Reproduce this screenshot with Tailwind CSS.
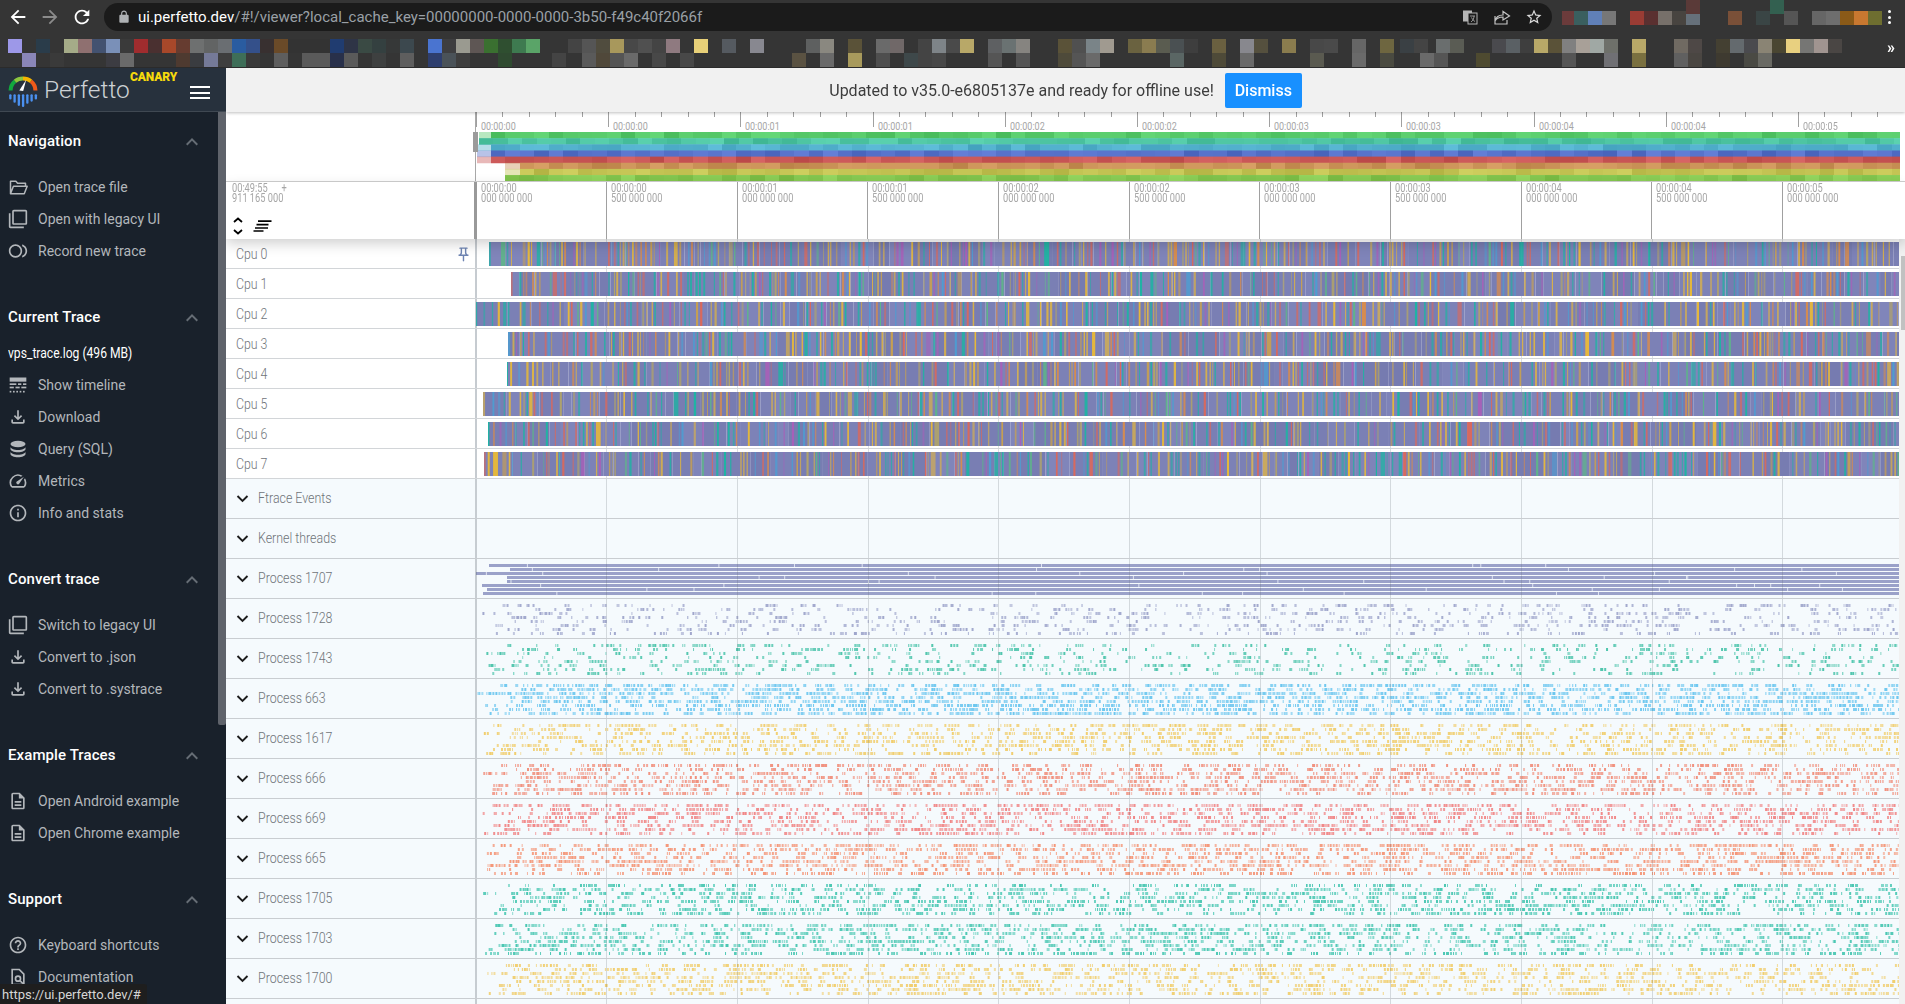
<!doctype html>
<html lang="en">
<head>
<meta charset="utf-8">
<title>Perfetto</title>
<script src="https://cdn.jsdelivr.net/npm/@tailwindcss/browser@4"></script>
</head>
<body class="h-[1004px] w-[1905px] overflow-hidden bg-white font-['Roboto',sans-serif]">
<svg class="hidden" xmlns="http://www.w3.org/2000/svg">
  <symbol id="i-folder" viewBox="0 0 24 24"><path d="M3 20V5h6.5l2 2.5H21V11M3 20l3.5-9H23l-3.5 9z" fill="none" stroke="currentColor" stroke-width="1.8" stroke-linejoin="round"/></symbol>
  <symbol id="i-legacy" viewBox="0 0 24 24"><path fill="currentColor" d="M3 5H1v16c0 1.1.9 2 2 2h16v-2H3V5zm18-4H7c-1.1 0-2 .9-2 2v14c0 1.1.9 2 2 2h14c1.1 0 2-.9 2-2V3c0-1.1-.9-2-2-2zm0 16H7V3h14v14z"/></symbol>
  <symbol id="i-record" viewBox="0 0 24 24"><path fill="currentColor" d="M9 4c-4.42 0-8 3.58-8 8s3.58 8 8 8 8-3.58 8-8-3.58-8-8-8zm0 14c-3.31 0-6-2.69-6-6s2.69-6 6-6 6 2.69 6 6-2.69 6-6 6zm8-13.74v2.09c2.33.82 4 3.04 4 5.65s-1.67 4.83-4 5.65v2.09c3.45-.89 6-4.01 6-7.74s-2.55-6.85-6-7.74z"/></symbol>
  <symbol id="i-timeline" viewBox="0 0 24 24"><g fill="currentColor"><rect x="2" y="3" width="20" height="5"/><rect x="2" y="10" width="8" height="2"/><rect x="12" y="10" width="4" height="2"/><rect x="18" y="10" width="4" height="2"/><rect x="2" y="14" width="5" height="2"/><rect x="9" y="14" width="5" height="2"/><rect x="16" y="14" width="6" height="2"/><rect x="2" y="19" width="2" height="2"/><rect x="6" y="19" width="2" height="2"/><rect x="10" y="19" width="2" height="2"/><rect x="14" y="19" width="2" height="2"/><rect x="18" y="19" width="2" height="2"/></g></symbol>
  <symbol id="i-download" viewBox="0 0 24 24"><path fill="currentColor" d="M18 15v3H6v-3H4v3c0 1.1.9 2 2 2h12c1.1 0 2-.9 2-2v-3h-2zm-1-4l-1.41-1.41L13 12.17V4h-2v8.17L8.41 9.59 7 11l5 5 5-5z"/></symbol>
  <symbol id="i-db" viewBox="0 0 24 24"><g fill="currentColor"><ellipse cx="12" cy="6" rx="9" ry="4"/><path d="M3 9.2c0 2.2 4 4 9 4s9-1.8 9-4V12c0 2.2-4 4-9 4s-9-1.800-9-4z"/><path d="M3 15c0 2.200 4 4 9 4s9-1.800 9-4v3c0 2.200-4 4-9 4s-9-1.800-9-4z"/></g></symbol>
  <symbol id="i-speed" viewBox="0 0 24 24"><path fill="currentColor" d="M20.38 8.570l-1.230 1.850a8 8 0 0 1-.220 7.580H5.070A8 8 0 0 1 15.580 6.850l1.850-1.230A10 10 0 0 0 3.350 19a2 2 0 0 0 1.720 1h13.850a2 2 0 0 0 1.740-1 10 10 0 0 0-.270-10.440zm-9.790 6.840a2 2 0 0 0 2.830 0l5.660-8.490-8.490 5.660a2 2 0 0 0 0 2.830z"/></symbol>
  <symbol id="i-info" viewBox="0 0 24 24"><path fill="currentColor" d="M11 7h2v2h-2zm0 4h2v6h-2zm1-9C6.480 2 2 6.480 2 12s4.480 10 10 10 10-4.480 10-10S17.520 2 12 2zm0 18c-4.410 0-8-3.590-8-8s3.590-8 8-8 8 3.590 8 8-3.590 8-8 8z"/></symbol>
  <symbol id="i-doc" viewBox="0 0 24 24"><path fill="currentColor" d="M8 16h8v2H8zm0-4h8v2H8zm6-10H6c-1.100 0-2 .9-2 2v16c0 1.100.89 2 1.990 2H18c1.100 0 2-.9 2-2V8l-6-6zm4 18H6V4h7v5h5v11z"/></symbol>
  <symbol id="i-help" viewBox="0 0 24 24"><path fill="currentColor" d="M11 18h2v-2h-2v2zm1-16C6.480 2 2 6.480 2 12s4.480 10 10 10 10-4.480 10-10S17.520 2 12 2zm0 18c-4.410 0-8-3.590-8-8s3.590-8 8-8 8 3.590 8 8-3.590 8-8 8zm0-14c-2.210 0-4 1.790-4 4h2c0-1.100.9-2 2-2s2 .9 2 2c0 2-3 1.750-3 5h2c0-2.250 3-2.500 3-5 0-2.210-1.790-4-4-4z"/></symbol>
  <symbol id="i-find" viewBox="0 0 24 24"><path d="M5 3h8.500L19 8.500V21H5z" fill="none" stroke="currentColor" stroke-width="2"/><circle cx="12" cy="14" r="3" fill="none" stroke="currentColor" stroke-width="2"/><path d="M14.500 16.500L18 20" stroke="currentColor" stroke-width="2"/></symbol>
  <symbol id="i-up" viewBox="0 0 24 24"><path fill="currentColor" d="M12 8l-6 6 1.410 1.410L12 10.830l4.590 4.580L18 14z"/></symbol>
  <symbol id="i-down" viewBox="0 0 24 24"><path d="M4 8l8 8 8-8" fill="none" stroke="currentColor" stroke-width="3"/></symbol>
</svg>

<!-- browser chrome -->
<div class="h-[68px] bg-[#353535] border-b border-[#2b2b2b] relative">
  <div class="flex h-[34px] items-center">
    <div class="flex w-[104px] items-center pl-[7px] gap-[10px]">
      <svg class="w-[22px] h-[22px] text-white" viewBox="0 0 24 24"><path fill="currentColor" d="M20 11H7.830l5.590-5.590L12 4l-8 8 8 8 1.410-1.410L7.830 13H20v-2z"/></svg>
      <svg class="w-[22px] h-[22px] text-[#8b8b8b]" viewBox="0 0 24 24"><path fill="currentColor" d="M4 11h12.170l-5.590-5.590L12 4l8 8-8 8-1.410-1.410L16.170 13H4v-2z"/></svg>
      <svg class="w-[22px] h-[22px] text-white" viewBox="0 0 24 24"><path fill="currentColor" d="M17.650 6.350C16.200 4.900 14.210 4 12 4c-4.420 0-7.990 3.580-7.990 8s3.570 8 7.990 8c3.730 0 6.840-2.550 7.730-6h-2.080c-.82 2.330-3.040 4-5.650 4-3.310 0-6-2.690-6-6s2.690-6 6-6c1.660 0 3.140.69 4.220 1.780L13 11h7V4l-2.350 2.350z"/></svg>
    </div>
    <div class="flex h-[28px] w-[1448px] items-center rounded-full bg-[#1b1b1b] pl-[13px] pr-[9px]">
      <svg class="w-[14px] h-[14px] text-[#aeb1b4]" viewBox="0 0 24 24"><path fill="currentColor" d="M18 8h-1V6c0-2.760-2.240-5-5-5S7 3.240 7 6v2H6c-1.100 0-2 .9-2 2v10c0 1.100.9 2 2 2h12c1.100 0 2-.9 2-2V10c0-1.100-.9-2-2-2zM9 6c0-1.660 1.340-3 3-3s3 1.340 3 3v2H9V6z"/></svg>
      <div class="ml-[7px] flex-1 text-[15px] whitespace-nowrap text-white">ui.perfetto.dev<span class="text-[#9aa0a6]">/#!/viewer?local_cache_key=00000000-0000-0000-3b50-f49c40f2066f</span></div>
      <svg class="w-[16px] h-[16px] text-[#b5b5b5]" viewBox="0 0 16 16"><rect x="1" y="1.500" width="9" height="11" fill="currentColor"/><rect x="6" y="4" width="9" height="11" fill="#1b1b1b" stroke="currentColor"/><path d="M8 7h5M9 13c2-1.500 3-3.500 3-6M9.500 8.500c1 2 2 3 3.500 4" stroke="currentColor" fill="none" stroke-width=".8"/></svg>
      <svg class="ml-[15px] w-[18px] h-[18px] text-[#c4c4c4]" viewBox="0 0 18 18"><path d="M2 8v8h12v-4M2 13c1-4 4-6 8-6V3.500L16.500 8 10 12V9c-3 0-6 1-8 4z" fill="none" stroke="currentColor" stroke-width="1.200"/></svg>
      <svg class="ml-[14px] w-[18px] h-[18px] text-[#dcdcdc]" viewBox="0 0 24 24"><path fill="currentColor" d="M22 9.240l-7.190-.62L12 2 9.190 8.630 2 9.240l5.460 4.730L5.820 21 12 17.270 18.180 21l-1.630-7.030L22 9.240zM12 15.400l-3.760 2.270 1-4.280-3.320-2.880 4.380-.38L12 6.100l1.710 4.040 4.380.38-3.320 2.880 1 4.280L12 15.400z"/></svg>
    </div>
    <canvas id="topMosaic" width="330" height="34" class="ml-[10px] block w-[330px] h-[34px]"></canvas>
    <div class="flex flex-col items-center gap-[2.500px] ml-[-4px]">
      <span class="h-[3px] w-[3px] rounded-full bg-white"></span><span class="h-[3px] w-[3px] rounded-full bg-white"></span><span class="h-[3px] w-[3px] rounded-full bg-white"></span>
    </div>
  </div>
  <canvas id="bookmarks" width="1905" height="33" class="block w-[1905px] h-[33px]"></canvas>
  <div class="absolute left-[1887px] top-[39px] text-[16px] leading-[18px] font-bold text-white">»</div>
</div>

<div class="flex h-[936px]">
  <!-- sidebar -->
  <aside class="relative w-[226px] shrink-0 overflow-hidden bg-[#19212b]">
    <div class="relative h-[44px] border-b border-[#3f4852] bg-[#27313d]">
      <div class="flex h-full items-center pl-[8px]">
        <svg class="w-[30px] h-[34px] mt-[2px]" viewBox="0 0 28 32">
          <g fill="none" stroke-width="3.800">
            <path d="M2.300 15.500A11.500 11.500 0 0 1 6.500 6.800" stroke="#12a83e"/>
            <path d="M6.500 6.800A11.500 11.500 0 0 1 14 4.200" stroke="#8cc63f"/>
            <path d="M14 4.200A11.500 11.500 0 0 1 21.500 6.800" stroke="#f4b400"/>
            <path d="M21.500 6.800A11.500 11.500 0 0 1 25.700 15.500" stroke="#ef5a1a"/>
          </g>
          <path d="M10.500 15.500L17 5.500L14.200 16z" fill="#fff"/>
          <g fill="#4a90f0">
            <rect x="1" y="19" width="2.200" height="5" rx="1"/><rect x="5" y="19" width="2.200" height="8" rx="1"/><rect x="9" y="19" width="2.200" height="11" rx="1"/><rect x="13" y="19" width="2.200" height="12" rx="1"/><rect x="17" y="19" width="2.200" height="9" rx="1"/><rect x="21" y="19" width="2.200" height="7" rx="1"/><rect x="25" y="19" width="2.200" height="5" rx="1"/>
          </g>
        </svg>
        <span class="ml-[6px] pt-[2px] text-[24.500px] font-light leading-none text-[#cdd1d5]">Perfetto</span>
      </div>
      <span class="absolute left-[130px] top-[2px] text-[12px] leading-[14px] font-black tracking-[-0.1px] text-[#f6d90c]">CANARY</span>
      <div class="absolute left-[190px] top-[18px] flex w-[20px] flex-col gap-[3.500px]">
        <span class="h-[2px] bg-white"></span><span class="h-[2px] bg-white"></span><span class="h-[2px] bg-white"></span>
      </div>
    </div>

    <div class="pt-[13px] text-[14px] text-[#b3b7bb]">
      <div class="flex h-[32px] items-center justify-between pl-[8px] pr-[22px] pt-[1px] text-[15px] font-medium tracking-[.1px] text-white"><span>Navigation</span><svg class="w-[24px] h-[24px] text-[#666d75]"><use href="#i-up"/></svg></div>
      <div class="mt-[14px]">
        <div class="flex h-[32px] items-center gap-[10px] pl-[8px]"><svg class="w-[20px] h-[20px]"><use href="#i-folder"/></svg><span>Open trace file</span></div>
        <div class="flex h-[32px] items-center gap-[10px] pl-[8px]"><svg class="w-[20px] h-[20px]"><use href="#i-legacy"/></svg><span>Open with legacy UI</span></div>
        <div class="flex h-[32px] items-center gap-[10px] pl-[8px]"><svg class="w-[20px] h-[20px]"><use href="#i-record"/></svg><span>Record new trace</span></div>
      </div>

      <div class="mt-[34px] flex h-[32px] items-center justify-between pl-[8px] pr-[22px] pt-[1px] text-[15px] font-medium tracking-[.1px] text-white"><span>Current Trace</span><svg class="w-[24px] h-[24px] text-[#666d75]"><use href="#i-up"/></svg></div>
      <div class="flex h-[36px] items-center pl-[8px] pt-[4px] text-white"><span class="inline-block origin-left scale-x-[.865] whitespace-nowrap">vps_trace.log (496 MB)</span></div>
      <div>
        <div class="flex h-[32px] items-center gap-[10px] pl-[8px]"><svg class="w-[20px] h-[20px]"><use href="#i-timeline"/></svg><span>Show timeline</span></div>
        <div class="flex h-[32px] items-center gap-[10px] pl-[8px]"><svg class="w-[20px] h-[20px]"><use href="#i-download"/></svg><span>Download</span></div>
        <div class="flex h-[32px] items-center gap-[10px] pl-[8px]"><svg class="w-[20px] h-[20px]"><use href="#i-db"/></svg><span>Query (SQL)</span></div>
        <div class="flex h-[32px] items-center gap-[10px] pl-[8px]"><svg class="w-[20px] h-[20px]"><use href="#i-speed"/></svg><span>Metrics</span></div>
        <div class="flex h-[32px] items-center gap-[10px] pl-[8px]"><svg class="w-[20px] h-[20px]"><use href="#i-info"/></svg><span>Info and stats</span></div>
      </div>

      <div class="mt-[34px] flex h-[32px] items-center justify-between pl-[8px] pr-[22px] pt-[1px] text-[15px] font-medium tracking-[.1px] text-white"><span>Convert trace</span><svg class="w-[24px] h-[24px] text-[#666d75]"><use href="#i-up"/></svg></div>
      <div class="mt-[14px]">
        <div class="flex h-[32px] items-center gap-[10px] pl-[8px]"><svg class="w-[20px] h-[20px]"><use href="#i-legacy"/></svg><span>Switch to legacy UI</span></div>
        <div class="flex h-[32px] items-center gap-[10px] pl-[8px]"><svg class="w-[20px] h-[20px]"><use href="#i-download"/></svg><span>Convert to .json</span></div>
        <div class="flex h-[32px] items-center gap-[10px] pl-[8px]"><svg class="w-[20px] h-[20px]"><use href="#i-download"/></svg><span>Convert to .systrace</span></div>
      </div>

      <div class="mt-[34px] flex h-[32px] items-center justify-between pl-[8px] pr-[22px] pt-[1px] text-[15px] font-medium tracking-[.1px] text-white"><span>Example Traces</span><svg class="w-[24px] h-[24px] text-[#666d75]"><use href="#i-up"/></svg></div>
      <div class="mt-[14px]">
        <div class="flex h-[32px] items-center gap-[10px] pl-[8px]"><svg class="w-[20px] h-[20px]"><use href="#i-doc"/></svg><span>Open Android example</span></div>
        <div class="flex h-[32px] items-center gap-[10px] pl-[8px]"><svg class="w-[20px] h-[20px]"><use href="#i-doc"/></svg><span>Open Chrome example</span></div>
      </div>

      <div class="mt-[34px] flex h-[32px] items-center justify-between pl-[8px] pr-[22px] pt-[1px] text-[15px] font-medium tracking-[.1px] text-white"><span>Support</span><svg class="w-[24px] h-[24px] text-[#666d75]"><use href="#i-up"/></svg></div>
      <div class="mt-[14px]">
        <div class="flex h-[32px] items-center gap-[10px] pl-[8px]"><svg class="w-[20px] h-[20px]"><use href="#i-help"/></svg><span>Keyboard shortcuts</span></div>
        <div class="flex h-[32px] items-center gap-[10px] pl-[8px]"><svg class="w-[20px] h-[20px]"><use href="#i-find"/></svg><span>Documentation</span></div>
      </div>
    </div>
    <div class="absolute left-[218px] top-[44px] h-[613px] w-[8px] rounded-b-[2px] bg-[#5f636b]"></div>
  </aside>

  <!-- main -->
  <main class="flex w-[1679px] flex-col overflow-hidden">
    <div class="relative z-10 flex h-[44px] shrink-0 items-center justify-center gap-[11px] bg-[#f1f1f1] pl-[0px] pt-[1px] shadow-[0_1px_3px_rgba(0,0,0,.25)]">
      <span class="text-[16px] text-[#3d3d3d]">Updated to v35.0-e6805137e and ready for offline use!</span>
      <span class="flex h-[35px] w-[77px] items-center justify-center rounded-[2px] bg-[#1890ff] text-[16px] font-medium text-white">Dismiss</span>
    </div>

    <!-- overview -->
    <div class="flex h-[70px] shrink-0 border-b border-[#cfcfcf]">
      <div class="w-[249px] shrink-0"></div>
      <div class="relative flex-1 border-l border-[#a8a8a8]">
        <div class="flex h-[20px] w-[1424px] bg-[repeating-linear-gradient(90deg,#a0a0a0_0,#a0a0a0_1px,transparent_1px,transparent_26.440px)] bg-[length:100%_5px] bg-no-repeat text-[10px] leading-[10px] text-[#a6a6a6]">
          <div class="h-[15px] w-[132.200px] shrink-0 border-l border-[#a0a0a0] pl-[4px] pt-[10px]"><span class="inline-block origin-left scale-x-[.9]">00:00:00</span></div>
          <div class="h-[15px] w-[132.200px] shrink-0 border-l border-[#a0a0a0] pl-[4px] pt-[10px]"><span class="inline-block origin-left scale-x-[.9]">00:00:00</span></div>
          <div class="h-[15px] w-[132.200px] shrink-0 border-l border-[#a0a0a0] pl-[4px] pt-[10px]"><span class="inline-block origin-left scale-x-[.9]">00:00:01</span></div>
          <div class="h-[15px] w-[132.200px] shrink-0 border-l border-[#a0a0a0] pl-[4px] pt-[10px]"><span class="inline-block origin-left scale-x-[.9]">00:00:01</span></div>
          <div class="h-[15px] w-[132.200px] shrink-0 border-l border-[#a0a0a0] pl-[4px] pt-[10px]"><span class="inline-block origin-left scale-x-[.9]">00:00:02</span></div>
          <div class="h-[15px] w-[132.200px] shrink-0 border-l border-[#a0a0a0] pl-[4px] pt-[10px]"><span class="inline-block origin-left scale-x-[.9]">00:00:02</span></div>
          <div class="h-[15px] w-[132.200px] shrink-0 border-l border-[#a0a0a0] pl-[4px] pt-[10px]"><span class="inline-block origin-left scale-x-[.9]">00:00:03</span></div>
          <div class="h-[15px] w-[132.200px] shrink-0 border-l border-[#a0a0a0] pl-[4px] pt-[10px]"><span class="inline-block origin-left scale-x-[.9]">00:00:03</span></div>
          <div class="h-[15px] w-[132.200px] shrink-0 border-l border-[#a0a0a0] pl-[4px] pt-[10px]"><span class="inline-block origin-left scale-x-[.9]">00:00:04</span></div>
          <div class="h-[15px] w-[132.200px] shrink-0 border-l border-[#a0a0a0] pl-[4px] pt-[10px]"><span class="inline-block origin-left scale-x-[.9]">00:00:04</span></div>
          <div class="h-[15px] w-[100px] shrink-0 border-l border-[#a0a0a0] pl-[4px] pt-[10px]"><span class="inline-block origin-left scale-x-[.9]">00:00:05</span></div>
        </div>
        <canvas id="heat" width="1424" height="49" class="block w-[1424px] h-[49px]"></canvas>
        <div class="absolute left-[-3px] top-[20px] h-[20px] w-[5px] bg-[#9b9b9b]"></div>
      </div>
    </div>

    <!-- time axis -->
    <div class="relative z-10 flex h-[57px] shrink-0 bg-white shadow-[0_5px_12px_rgba(0,0,0,.18)]">
      <div class="flex w-[248px] shrink-0 flex-col justify-between pl-[6px] pt-[1px] pb-[4px]">
        <div class="text-[12px] leading-[10px] text-[#a6a6a6]">
          <div class="inline-block origin-left scale-x-[.77] whitespace-pre">00:49:55      +<br>911 165 000</div>
        </div>
        <div class="flex items-center gap-[9px]">
          <svg class="w-[12px] h-[18px] text-black" viewBox="0 0 12 18"><path d="M2 5l4-3.500L10 5M2 13l4 3.500L10 13" fill="none" stroke="currentColor" stroke-width="1.800"/></svg>
          <svg class="w-[19px] h-[12px] text-black" viewBox="0 0 19 12"><path d="M5 1.200h13.500M3.500 4.600h12M2 8h13M.5 11h10" stroke="currentColor" stroke-width="1.700"/></svg>
        </div>
      </div>
      <div class="flex flex-1 text-[12px] leading-[10px] text-[#a6a6a6]">
        <div class="h-full w-[132px] shrink-0 border-l-[3px] border-[#999] pl-[4px] pt-[1px]"><div class="origin-left scale-x-[.77] whitespace-nowrap">00:00:00<br>000 000 000</div></div>
        <div class="h-full w-[130.670px] shrink-0 border-l border-[#a0a0a0] pl-[4px] pt-[1px]"><div class="origin-left scale-x-[.77] whitespace-nowrap">00:00:00<br>500 000 000</div></div>
        <div class="h-full w-[130.670px] shrink-0 border-l border-[#a0a0a0] pl-[4px] pt-[1px]"><div class="origin-left scale-x-[.77] whitespace-nowrap">00:00:01<br>000 000 000</div></div>
        <div class="h-full w-[130.670px] shrink-0 border-l border-[#a0a0a0] pl-[4px] pt-[1px]"><div class="origin-left scale-x-[.77] whitespace-nowrap">00:00:01<br>500 000 000</div></div>
        <div class="h-full w-[130.670px] shrink-0 border-l border-[#a0a0a0] pl-[4px] pt-[1px]"><div class="origin-left scale-x-[.77] whitespace-nowrap">00:00:02<br>000 000 000</div></div>
        <div class="h-full w-[130.670px] shrink-0 border-l border-[#a0a0a0] pl-[4px] pt-[1px]"><div class="origin-left scale-x-[.77] whitespace-nowrap">00:00:02<br>500 000 000</div></div>
        <div class="h-full w-[130.670px] shrink-0 border-l border-[#a0a0a0] pl-[4px] pt-[1px]"><div class="origin-left scale-x-[.77] whitespace-nowrap">00:00:03<br>000 000 000</div></div>
        <div class="h-full w-[130.670px] shrink-0 border-l border-[#a0a0a0] pl-[4px] pt-[1px]"><div class="origin-left scale-x-[.77] whitespace-nowrap">00:00:03<br>500 000 000</div></div>
        <div class="h-full w-[130.670px] shrink-0 border-l border-[#a0a0a0] pl-[4px] pt-[1px]"><div class="origin-left scale-x-[.77] whitespace-nowrap">00:00:04<br>000 000 000</div></div>
        <div class="h-full w-[130.670px] shrink-0 border-l border-[#a0a0a0] pl-[4px] pt-[1px]"><div class="origin-left scale-x-[.77] whitespace-nowrap">00:00:04<br>500 000 000</div></div>
        <div class="h-full w-[120px] shrink-0 border-l border-[#a0a0a0] pl-[4px] pt-[1px]"><div class="origin-left scale-x-[.77] whitespace-nowrap">00:00:05<br>000 000 000</div></div>
      </div>
    </div>

    <!-- tracks -->
    <div class="relative flex min-h-0 flex-1">
      <div class="w-[1673px] shrink-0 text-[14px] font-light text-[#6f7479]">
        <div class="flex h-[30px] border-b border-[#d2d5d8] bg-white"><div class="relative flex w-[249px] shrink-0 items-center pl-[10px] pt-[2px]"><span class="inline-block origin-left scale-x-[.88]">Cpu 0</span><svg class="absolute left-[229px] top-[7px] w-[17px] h-[17px] text-[#6e84b2]" viewBox="0 0 24 24"><path fill="currentColor" d="M14 4v5c0 1.120.37 2.160 1 3H9c.65-.86 1-1.900 1-3V4h4m3-2H7c-.55 0-1 .45-1 1s.45 1 1 1h1v5c0 1.660-1.340 3-3 3v2h5.970v7l1 1 1-1v-7H19v-2c-1.660 0-3-1.340-3-3V4h1c.55 0 1-.45 1-1s-.45-1-1-1z"/></svg></div><canvas data-cpu="14" width="1424" height="29" class="block w-[1424px] h-[29px]"></canvas></div>
        <div class="flex h-[30px] border-b border-[#d2d5d8] bg-white"><div class="flex w-[249px] shrink-0 items-center pl-[10px] pt-[2px]"><span class="inline-block origin-left scale-x-[.88]">Cpu 1</span></div><canvas data-cpu="36" width="1424" height="29" class="block w-[1424px] h-[29px]"></canvas></div>
        <div class="flex h-[30px] border-b border-[#d2d5d8] bg-white"><div class="flex w-[249px] shrink-0 items-center pl-[10px] pt-[2px]"><span class="inline-block origin-left scale-x-[.88]">Cpu 2</span></div><canvas data-cpu="1" width="1424" height="29" class="block w-[1424px] h-[29px]"></canvas></div>
        <div class="flex h-[30px] border-b border-[#d2d5d8] bg-white"><div class="flex w-[249px] shrink-0 items-center pl-[10px] pt-[2px]"><span class="inline-block origin-left scale-x-[.88]">Cpu 3</span></div><canvas data-cpu="33" width="1424" height="29" class="block w-[1424px] h-[29px]"></canvas></div>
        <div class="flex h-[30px] border-b border-[#d2d5d8] bg-white"><div class="flex w-[249px] shrink-0 items-center pl-[10px] pt-[2px]"><span class="inline-block origin-left scale-x-[.88]">Cpu 4</span></div><canvas data-cpu="32" width="1424" height="29" class="block w-[1424px] h-[29px]"></canvas></div>
        <div class="flex h-[30px] border-b border-[#d2d5d8] bg-white"><div class="flex w-[249px] shrink-0 items-center pl-[10px] pt-[2px]"><span class="inline-block origin-left scale-x-[.88]">Cpu 5</span></div><canvas data-cpu="8" width="1424" height="29" class="block w-[1424px] h-[29px]"></canvas></div>
        <div class="flex h-[30px] border-b border-[#d2d5d8] bg-white"><div class="flex w-[249px] shrink-0 items-center pl-[10px] pt-[2px]"><span class="inline-block origin-left scale-x-[.88]">Cpu 6</span></div><canvas data-cpu="13" width="1424" height="29" class="block w-[1424px] h-[29px]"></canvas></div>
        <div class="flex h-[30px] border-b border-[#d2d5d8] bg-white"><div class="flex w-[249px] shrink-0 items-center pl-[10px] pt-[2px]"><span class="inline-block origin-left scale-x-[.88]">Cpu 7</span></div><canvas data-cpu="9" width="1424" height="29" class="block w-[1424px] h-[29px]"></canvas></div>

        <div class="flex h-[40px] border-b border-[#c9cdd1] bg-[#f5fafd]"><div class="flex w-[249px] shrink-0 items-center gap-[8px] pl-[9px]"><svg class="w-[15px] h-[15px] text-[#1c1c1c]"><use href="#i-down"/></svg><span class="inline-block origin-left scale-x-[.885] whitespace-nowrap">Ftrace Events</span></div><canvas data-proc="" data-density="0" width="1424" height="39" class="block w-[1424px] h-[39px]"></canvas></div>
        <div class="flex h-[40px] border-b border-[#c9cdd1] bg-[#f5fafd]"><div class="flex w-[249px] shrink-0 items-center gap-[8px] pl-[9px]"><svg class="w-[15px] h-[15px] text-[#1c1c1c]"><use href="#i-down"/></svg><span class="inline-block origin-left scale-x-[.885] whitespace-nowrap">Kernel threads</span></div><canvas data-proc="" data-density="0" width="1424" height="39" class="block w-[1424px] h-[39px]"></canvas></div>
        <div class="flex h-[40px] border-b border-[#c9cdd1] bg-[#f5fafd]"><div class="flex w-[249px] shrink-0 items-center gap-[8px] pl-[9px]"><svg class="w-[15px] h-[15px] text-[#1c1c1c]"><use href="#i-down"/></svg><span class="inline-block origin-left scale-x-[.885] whitespace-nowrap">Process 1707</span></div><canvas data-proc="#9aa1c9" data-density="1" width="1424" height="39" class="block w-[1424px] h-[39px]"></canvas></div>
        <div class="flex h-[40px] border-b border-[#c9cdd1] bg-[#f5fafd]"><div class="flex w-[249px] shrink-0 items-center gap-[8px] pl-[9px]"><svg class="w-[15px] h-[15px] text-[#1c1c1c]"><use href="#i-down"/></svg><span class="inline-block origin-left scale-x-[.885] whitespace-nowrap">Process 1728</span></div><canvas data-proc="#9aa1c9" data-density=".22" width="1424" height="39" class="block w-[1424px] h-[39px]"></canvas></div>
        <div class="flex h-[40px] border-b border-[#c9cdd1] bg-[#f5fafd]"><div class="flex w-[249px] shrink-0 items-center gap-[8px] pl-[9px]"><svg class="w-[15px] h-[15px] text-[#1c1c1c]"><use href="#i-down"/></svg><span class="inline-block origin-left scale-x-[.885] whitespace-nowrap">Process 1743</span></div><canvas data-proc="#45c2a8" data-density=".22" width="1424" height="39" class="block w-[1424px] h-[39px]"></canvas></div>
        <div class="flex h-[40px] border-b border-[#c9cdd1] bg-[#f5fafd]"><div class="flex w-[249px] shrink-0 items-center gap-[8px] pl-[9px]"><svg class="w-[15px] h-[15px] text-[#1c1c1c]"><use href="#i-down"/></svg><span class="inline-block origin-left scale-x-[.885] whitespace-nowrap">Process 663</span></div><canvas data-proc="#63c3ee" data-density=".52" width="1424" height="39" class="block w-[1424px] h-[39px]"></canvas></div>
        <div class="flex h-[40px] border-b border-[#c9cdd1] bg-[#f5fafd]"><div class="flex w-[249px] shrink-0 items-center gap-[8px] pl-[9px]"><svg class="w-[15px] h-[15px] text-[#1c1c1c]"><use href="#i-down"/></svg><span class="inline-block origin-left scale-x-[.885] whitespace-nowrap">Process 1617</span></div><canvas data-proc="#f0cb66" data-density=".4" width="1424" height="39" class="block w-[1424px] h-[39px]"></canvas></div>
        <div class="flex h-[40px] border-b border-[#c9cdd1] bg-[#f5fafd]"><div class="flex w-[249px] shrink-0 items-center gap-[8px] pl-[9px]"><svg class="w-[15px] h-[15px] text-[#1c1c1c]"><use href="#i-down"/></svg><span class="inline-block origin-left scale-x-[.885] whitespace-nowrap">Process 666</span></div><canvas data-proc="#f08a76" data-density=".45" width="1424" height="39" class="block w-[1424px] h-[39px]"></canvas></div>
        <div class="flex h-[40px] border-b border-[#c9cdd1] bg-[#f5fafd]"><div class="flex w-[249px] shrink-0 items-center gap-[8px] pl-[9px]"><svg class="w-[15px] h-[15px] text-[#1c1c1c]"><use href="#i-down"/></svg><span class="inline-block origin-left scale-x-[.885] whitespace-nowrap">Process 669</span></div><canvas data-proc="#f08080" data-density=".45" width="1424" height="39" class="block w-[1424px] h-[39px]"></canvas></div>
        <div class="flex h-[40px] border-b border-[#c9cdd1] bg-[#f5fafd]"><div class="flex w-[249px] shrink-0 items-center gap-[8px] pl-[9px]"><svg class="w-[15px] h-[15px] text-[#1c1c1c]"><use href="#i-down"/></svg><span class="inline-block origin-left scale-x-[.885] whitespace-nowrap">Process 665</span></div><canvas data-proc="#f49070" data-density=".45" width="1424" height="39" class="block w-[1424px] h-[39px]"></canvas></div>
        <div class="flex h-[40px] border-b border-[#c9cdd1] bg-[#f5fafd]"><div class="flex w-[249px] shrink-0 items-center gap-[8px] pl-[9px]"><svg class="w-[15px] h-[15px] text-[#1c1c1c]"><use href="#i-down"/></svg><span class="inline-block origin-left scale-x-[.885] whitespace-nowrap">Process 1705</span></div><canvas data-proc="#40c4ae" data-density=".4" width="1424" height="39" class="block w-[1424px] h-[39px]"></canvas></div>
        <div class="flex h-[40px] border-b border-[#c9cdd1] bg-[#f5fafd]"><div class="flex w-[249px] shrink-0 items-center gap-[8px] pl-[9px]"><svg class="w-[15px] h-[15px] text-[#1c1c1c]"><use href="#i-down"/></svg><span class="inline-block origin-left scale-x-[.885] whitespace-nowrap">Process 1703</span></div><canvas data-proc="#40c4ae" data-density=".4" width="1424" height="39" class="block w-[1424px] h-[39px]"></canvas></div>
        <div class="flex h-[40px] border-b border-[#c9cdd1] bg-[#f5fafd]"><div class="flex w-[249px] shrink-0 items-center gap-[8px] pl-[9px]"><svg class="w-[15px] h-[15px] text-[#1c1c1c]"><use href="#i-down"/></svg><span class="inline-block origin-left scale-x-[.885] whitespace-nowrap">Process 1700</span></div><canvas data-proc="#f0cb66" data-density=".4" width="1424" height="39" class="block w-[1424px] h-[39px]"></canvas></div>
        <div class="flex h-[40px] bg-[#f5fafd]"><div class="w-[249px] shrink-0"></div><canvas data-proc="" data-density="0" width="1424" height="39" class="block w-[1424px] h-[39px]"></canvas></div>
      </div>
      <div class="relative w-[6px] shrink-0 bg-[#f1f1f1]">
        <div class="absolute left-[2px] top-[17px] h-[74px] w-[4px] bg-[#c1c1c1]"></div>
      </div>
    </div>
  </main>
</div>

<div class="absolute bottom-0 left-0 z-20 flex h-[20px] w-[147px] items-center rounded-tr-[3px] bg-[#1e1e1e] pl-[2px] pt-[1px] text-[13px] whitespace-nowrap text-[#d6d6d6]">https://ui.perfetto.dev/#</div>

<script>
let seed = 12345;
function R(){ seed = (seed*1664525+1013904223)>>>0; return seed/4294967296; }
function pick(a){ return a[Math.floor(R()*a.length)]; }

// blurred bookmark mosaics
function cells(ctx, y, list){ for(const [x,c] of list){ ctx.fillStyle=c; ctx.fillRect(x,y,14,14); } }
const bm = document.getElementById('bookmarks').getContext('2d');
const rowB = [[8,'#9d98e8'],[36,'#2a3c4a'],[64,'#a5ab88'],[78,'#8f7070'],[92,'#435270'],[106,'#7a90b8'],[120,'#3a3a3a'],[134,'#a02c2e'],[148,'#4a3030'],[162,'#a8482a'],[176,'#663c30'],[190,'#6e7070'],[204,'#626464'],[218,'#6a6e72'],[232,'#2a5ca0'],[246,'#34508a'],[260,'#383030'],[274,'#6a4a28'],[288,'#333'],[302,'#333'],[316,'#333'],[330,'#203c70'],[344,'#2e3446'],[358,'#3a4a44'],[372,'#344040'],[386,'#363838'],[400,'#3c484e'],[428,'#4a74d0'],[442,'#3e3e40'],[456,'#9a9a90'],[470,'#5e5654'],[484,'#3a7030'],[498,'#2f4f30'],[512,'#3e7a50'],[526,'#5aa468'],[568,'#444'],[582,'#555'],[596,'#504c3e'],[610,'#a8985c'],[624,'#484848'],[638,'#505050'],[652,'#444'],[666,'#8f7a80'],[694,'#e8d078'],[722,'#555a60'],[750,'#888890'],[806,'#5e6060'],[820,'#8a8880'],[848,'#5a5238'],[876,'#6a6a6a'],[890,'#706868'],[918,'#444'],[932,'#7e8488'],[946,'#4a4a4a'],[960,'#b8a868'],[988,'#5e6062'],[1002,'#6a7272'],[1016,'#868480'],[1058,'#5a5238'],[1072,'#505050'],[1086,'#7a8488'],[1100,'#a09a90'],[1128,'#6a6240'],[1142,'#8a7c50'],[1156,'#5a5c50'],[1170,'#4a5052'],[1184,'#3e3e3e'],[1212,'#6a6040'],[1240,'#88888e'],[1254,'#55503e'],[1282,'#8a7c4e'],[1310,'#484848'],[1324,'#4a4a4a'],[1352,'#666'],[1380,'#6e6640'],[1400,'#3a4044'],[1414,'#444'],[1436,'#6a6e6e'],[1450,'#5a5c54'],[1492,'#4a4a4e'],[1506,'#5a6064'],[1520,'#3e3e3e'],[1534,'#b8a868'],[1548,'#5a5238'],[1562,'#808080'],[1576,'#a8a098'],[1590,'#a0a8a4'],[1604,'#6e706a'],[1632,'#b8a868'],[1674,'#706a62'],[1688,'#4e4846'],[1716,'#444032'],[1730,'#646a6e'],[1744,'#4a4a4e'],[1758,'#8a8474'],[1772,'#4a4632'],[1786,'#e8d080'],[1800,'#767674'],[1814,'#a09490'],[1828,'#4a4644']];
const rowC = [[22,'#8a86b8'],[50,'#3a3a3a'],[106,'#3c3c42'],[120,'#6a6a6a'],[176,'#4e3a30'],[190,'#3a3c40'],[204,'#757a98'],[218,'#3e3e3e'],[232,'#3e6e58'],[246,'#3a3a3a'],[274,'#5e5e5e'],[302,'#5a5a5a'],[316,'#5a5a5a'],[330,'#28304a'],[344,'#5a5a5a'],[372,'#3e4040'],[400,'#5e5e5e'],[428,'#2e3e6e'],[442,'#4a5258'],[456,'#3e3e3e'],[498,'#2f4a30'],[552,'#444'],[582,'#5a5a5a'],[596,'#50483a'],[610,'#555'],[624,'#6a6a6a'],[652,'#484848'],[680,'#484848'],[792,'#5a5242'],[820,'#6a6a6a'],[848,'#a89a5c'],[876,'#4e4e4e'],[904,'#3e484a'],[918,'#444'],[932,'#484848'],[988,'#555'],[1016,'#555'],[1058,'#4e4a3a'],[1072,'#555'],[1086,'#6a6a6a'],[1170,'#5a6664'],[1212,'#4e4a38'],[1240,'#6a6a6a'],[1310,'#5a5a50'],[1352,'#6a6a6a'],[1380,'#4a4a40'],[1420,'#6a6a6a'],[1434,'#555'],[1476,'#4e4a30'],[1562,'#555'],[1604,'#707074'],[1632,'#7a7040'],[1674,'#606060'],[1688,'#4a4642'],[1716,'#3e3a30'],[1744,'#4a4a44'],[1758,'#6a6a64']];
cells(bm,5,rowB); cells(bm,19,rowC);

const tm = document.getElementById('topMosaic').getContext('2d');
cells(tm,11,[[0,'#6b3b3b'],[12,'#3a5f5f'],[26,'#6080b8'],[40,'#777'],[68,'#9a3c34'],[82,'#5a3030'],[96,'#77706a'],[110,'#484440'],[124,'#66707a'],[166,'#7a5038'],[194,'#3a4545'],[222,'#555'],[250,'#666'],[264,'#6e6e6e'],[278,'#8a5a18'],[292,'#c87830'],[306,'#6e6e30']]);
cells(tm,0,[[124,'#5a3a38'],[208,'#336050']]);

// overview heatmap
const heat = document.getElementById('heat').getContext('2d');
const hc = [[85,200,104],[76,195,160],[80,174,203],[85,112,200],[200,85,85],[200,144,85],[192,192,80],[133,200,80]];
const hs = [[3,15],[3,3],[1,15],[1,15],[1,15],[29,44],[29,44],[29,29]];
for(let r=0;r<8;r++){
  const base=hc[r];
  for(let k=0;k<100;k++){
    const x0 = k===0 ? hs[r][0] : Math.round(hs[r][1]+(k-1)*14.44);
    const x1 = Math.round(hs[r][1]+k*14.44);
    if(x1<=x0) continue;
    const v=(R()-.45)*28;
    const c=base.map(n=>Math.max(0,Math.min(255,Math.round(n+v))));
    heat.fillStyle=`rgb(${c[0]},${c[1]},${c[2]})`;
    if(k===0) heat.fillStyle=`rgba(${base[0]},${base[1]},${base[2]},.42)`;
    heat.fillRect(x0,r*6.15,x1-x0,6.15+.5);
  }
}

const ticks=[]; for(let k=1;k<11;k++) ticks.push(Math.round(.5+130.67*k));

// cpu tracks
const stripeColors=['#1fb3a3','#1fb3a3','#1fb3a3','#e6b83a','#e6b83a','#e6b83a','#d88c4c','#c8a050','#d9695c','#d9695c','#4f9cd0','#5fb38a','#b0a36a','#a860b8'];
document.querySelectorAll('canvas[data-cpu]').forEach(cv=>{
  const c=cv.getContext('2d'), start=+cv.dataset.cpu;
  c.fillStyle='#c6cbd0'; c.fillRect(0,0,2,29);
  c.fillStyle='#dcdfe2'; ticks.forEach(t=>c.fillRect(t,0,1,29));
  let x=start;
  while(x<1424){ const w=6+R()*30; const v=Math.round((R()-.5)*10); c.fillStyle=`rgb(${123+v},${128+v},${181+v})`; c.fillRect(x,3,w,24); x+=w; }
  x=start;
  while(x<1424){
    const w = R()<.05 ? 2.500+R()*2.500 : .8+R()*1.500;
    c.globalAlpha=.55+R()*.45;
    c.fillStyle=pick(stripeColors);
    c.fillRect(x,3,Math.min(w,1424-x),24);
    c.globalAlpha=1;
    x+=w+1+R()*R()*13;
  }
});

// process tracks
const starts=[14,35,1,32,32,7,12,8];
document.querySelectorAll('canvas[data-proc]').forEach(cv=>{
  const c=cv.getContext('2d'), col=cv.dataset.proc, d=+cv.dataset.density;
  if(d===1){
    c.fillStyle=col;
    starts.forEach((s,i)=>{
      c.fillRect(s,5+i*4,1424-s,3);
      for(let n=0;n<8;n++){ c.fillStyle='rgba(245,250,253,.75)'; c.fillRect(s+R()*(1424-s),5+i*4,1,3); c.fillStyle=col; }
    });
  } else if(d>0){
    c.fillStyle=col;
    starts.forEach((s,i)=>{
      let x=s+R()*8, on=R()<d;
      while(x<1424){
        if(R()>.3) on=R()<d;
        const w=1+Math.floor(R()*2)+(R()<.2?1:0);
        if(on){ c.globalAlpha=.55+R()*.4; c.fillRect(x,5+i*4,w,3); }
        x+=w+(R()<.6?1:0);
      }
      c.globalAlpha=1;
    });
  }
  c.fillStyle='rgba(90,100,110,.22)';
  ticks.forEach(t=>c.fillRect(t,0,1,39));
  c.fillStyle='rgba(90,100,110,.3)'; c.fillRect(0,0,2,39);
});
</script>
</body>
</html>
